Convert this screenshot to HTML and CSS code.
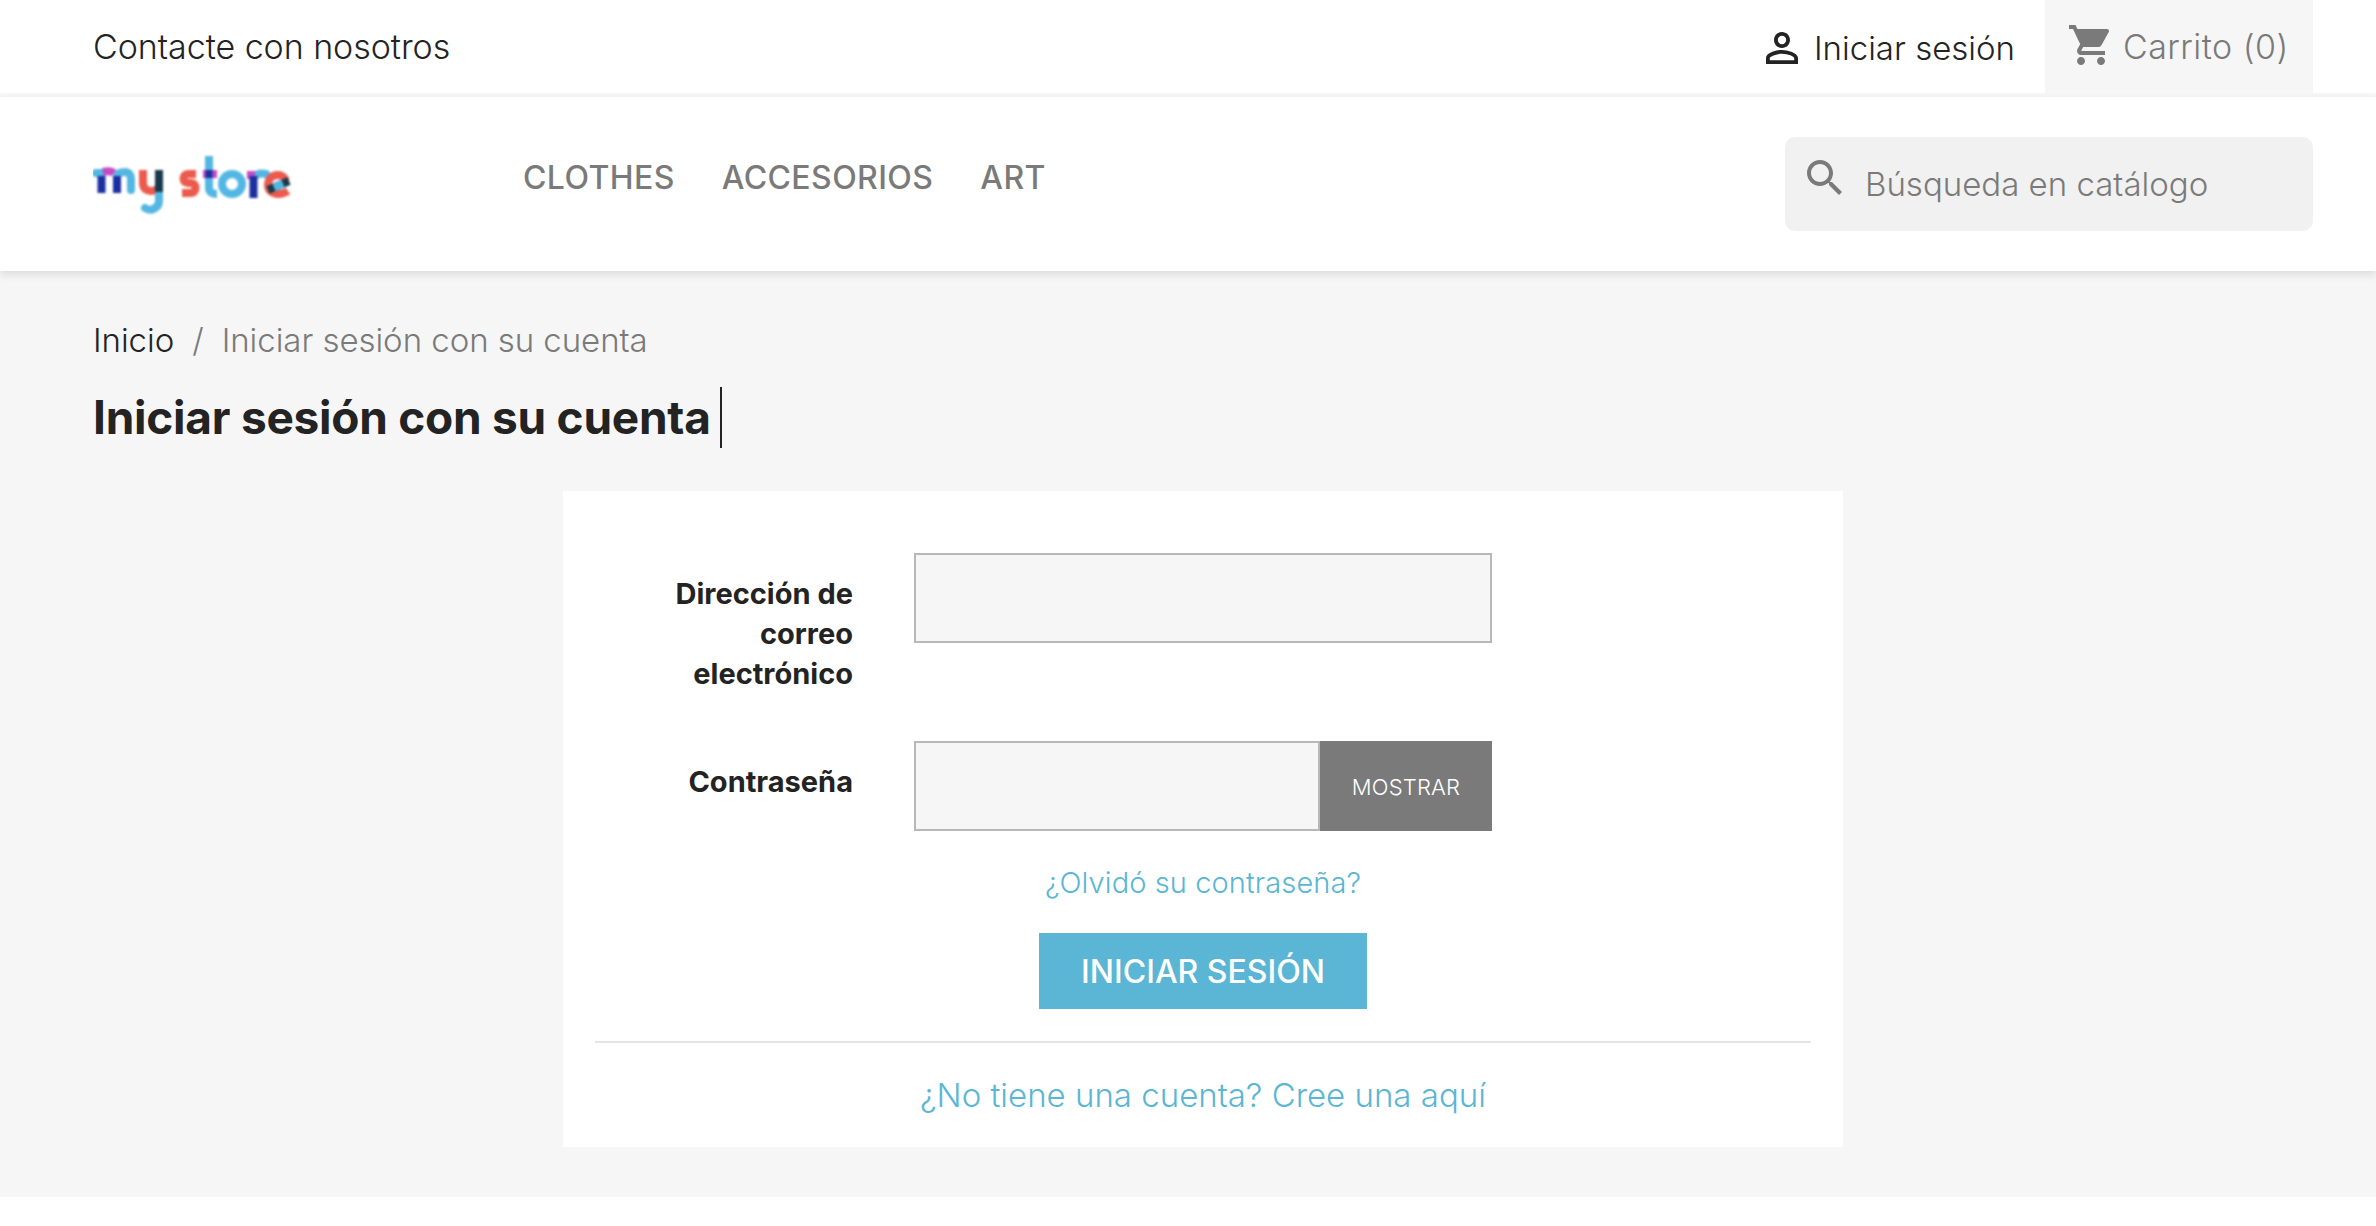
FILE: index.html
```html
<!DOCTYPE html>
<html lang="es">
<head>
<meta charset="utf-8">
<title>Iniciar sesión</title>
<link rel="stylesheet" href="styles.css">
</head>
<body>
<nav class="topbar">
  <a class="contact">Contacte con nosotros</a>
  <div class="top-right">
    <a class="signin">
      <svg class="ico-user" viewBox="0 0 24 24"><path d="M12 5.9a2.1 2.1 0 1 1 0 4.2 2.1 2.1 0 0 1 0-4.2m0 9c2.97 0 6.1 1.46 6.1 2.1v1.1H5.9V17c0-.64 3.13-2.1 6.1-2.1M12 4C9.79 4 8 5.79 8 8s1.79 4 4 4 4-1.79 4-4-1.79-4-4-4zm0 9c-2.67 0-8 1.34-8 4v3h16v-3c0-2.66-5.33-4-8-4z"/></svg>
      <span>Iniciar sesión</span>
    </a>
    <a class="cart">
      <svg class="ico-cart" viewBox="0 0 24 24"><path d="M7 18c-1.1 0-1.99.9-1.99 2S5.9 22 7 22s2-.9 2-2-.9-2-2-2zM1 2v2h2l3.6 7.59-1.35 2.45c-.16.28-.25.61-.25.96 0 1.1.9 2 2 2h12v-2H7.42c-.14 0-.25-.11-.25-.25l.03-.12.9-1.63h7.45c.75 0 1.41-.41 1.75-1.03l3.58-6.49c.08-.14.12-.31.12-.48 0-.55-.45-1-1-1H5.21l-.94-2H1zm16 16c-1.1 0-1.99.9-1.99 2s.89 2 1.99 2 2-.9 2-2-.9-2-2-2z"/></svg>
      <span>Carrito (0)</span>
    </a>
  </div>
</nav>
<header class="header">
  <a class="logo" aria-label="my store">
    <svg viewBox="0 0 210 70" width="210" height="70">
      <g class="logo-art" fill="none" stroke-width="8" stroke-linecap="butt" stroke-linejoin="round">
        <!-- m -->
        <path stroke="#54b7e3" stroke-linecap="round" d="M3 23h6M24 26c1-4 5-4 8-4 4 0 6 3 6 7v11"/>
        <path stroke="#c54bc4" d="M10 22c4-1 8-1 11 1"/>
        <path stroke="#1c2fa0" d="M8.500 26v17M24 26v17"/>
        <!-- y -->
        <path stroke="#ec5a4e" d="M50 20v13c0 6 4 8 8 8 4 0 7-2 8-5"/>
        <path stroke="#54b7e3" stroke-linecap="round" d="M66 42v9c0 7-8 11-14 7"/>
        <path stroke="#163a4a" d="M66 20v22"/>
        <!-- s -->
        <path stroke="#ec5a4e" d="M103 24H95c-6 0-6 9 0 9h3c6 0 6 10 0 10h-9"/>
        <!-- t -->
        <path stroke="#54b7e3" d="M116 6v32c0 4 3 6 8 6"/>
        <path stroke="#c54bc4" d="M110 24h14"/>
        <path stroke="#1c2fa0" d="M112.500 24h7"/>
        <!-- o -->
        <circle stroke="#54b7e3" cx="139" cy="34" r="10"/>
        <!-- r -->
        <path stroke="#54b7e3" stroke-linecap="round" d="M162 26c2-2 6-3 11-2"/>
        <path stroke="#c54bc4" d="M154 25h8"/>
        <path stroke="#1c2fa0" d="M160.500 26v22"/>
        <!-- e -->
        <path stroke="#ec5a4e" d="M193 31c-2-5-6-6-8-6-6 0-10 4-10 10 0 6 5 9 10 9 4 0 7-1 10-3"/>
        <path stroke="#163a4a" d="M175 40l21-9"/>
        <path stroke="#54b7e3" d="M181 37.500l9-4"/>
      </g>
    </svg>
  </a>
  <nav class="menu">
    <a>CLOTHES</a>
    <a>ACCESORIOS</a>
    <a>ART</a>
  </nav>
  <div class="search">
    <svg class="ico-search" viewBox="0 0 24 24"><path d="M15.5 14h-.79l-.28-.27C15.41 12.59 16 11.11 16 9.5 16 5.91 13.09 3 9.5 3S3 5.91 3 9.5 5.91 16 9.5 16c1.61 0 3.09-.59 4.23-1.57l.27.28v.79l5 4.99L20.49 19l-4.99-5zm-6 0C7.01 14 5 11.99 5 9.5S7.01 5 9.5 5 14 7.01 14 9.5 11.99 14 9.5 14z"/></svg>
    <span class="search-ph">Búsqueda en catálogo</span>
  </div>
</header>
<main class="main">
  <ol class="crumbs">
    <li class="crumb-home">Inicio</li>
    <li class="crumb-sep">/</li>
    <li class="crumb-cur">Iniciar sesión con su cuenta</li>
  </ol>
  <h1 class="title"><span class="title-text">Iniciar sesión con su cuenta</span><span class="caret"></span></h1>
  <section class="card">
    <form class="form">
      <div class="row row-email">
        <label class="label">Dirección de correo electrónico</label>
        <div class="field"><div class="input"></div></div>
      </div>
      <div class="row row-pass">
        <label class="label">Contraseña</label>
        <div class="field group"><div class="input"></div><div class="show">MOSTRAR</div></div>
      </div>
      <a class="forgot">¿Olvidó su contraseña?</a>
      <button type="button" class="submit">INICIAR SESIÓN</button>
    </form>
    <hr class="rule">
    <a class="register">¿No tiene una cuenta? Cree una aquí</a>
  </section>
</main>
</body>
</html>
```
FILE: styles.css
```css
* { box-sizing: border-box; }
html, body { margin: 0; padding: 0; background: #fff; }
body { font-family: Inter, "Noto Sans", sans-serif; color: #232323; height: 1226px; overflow: hidden; }
a { color: inherit; text-decoration: none; }
.topbar { height: 97px; border-bottom: 4px solid #f6f6f6; padding: 0 63px 0 93px; display: flex; justify-content: space-between; align-items: center; background: #fff; }
.contact { font-size: 34px; font-weight: 300; letter-spacing: -.05px; padding-top: 0; }
.top-right { display: flex; align-items: stretch; height: 93px; }
.signin { display: flex; align-items: center; gap: 8px; font-size: 33px; font-weight: 300; padding: 2px 30px 0 0; }
.ico-user { width: 48px; height: 48px; fill: #232323; }
.cart { display: flex; align-items: center; gap: 8px; width: 268px; padding-left: 22px; background: #f6f6f6; color: #7a7a7a; font-size: 34px; font-weight: 300; letter-spacing: .45px; }
.ico-cart { width: 48px; height: 48px; fill: #7a7a7a; margin-top: -3px; }
.header { height: 174px; padding: 0 63px 0 93px; display: flex; align-items: center; background: #fff; box-shadow: 0 4px 8px rgba(0,0,0,.1); position: relative; }
.logo { width: 430px; display: block; margin-top: 2px; }
.logo svg { display: block; }
.logo-art { filter: blur(.8px); }
.menu { display: flex; gap: 47px; font-size: 32px; font-weight: 500; color: #7a7a7a; letter-spacing: .4px; flex: 1; margin-top: -13px; }
.search { width: 528px; height: 94px; background: #f1f1f1; border-radius: 10px; display: flex; align-items: center; padding-left: 16px; gap: 16px; color: #7a7a7a; }
.ico-search { width: 48px; height: 48px; fill: #7a7a7a; margin-top: -12px; }
.search-ph { font-size: 33px; font-weight: 300; }
.main { height: 926px; background: #f6f6f6; padding: 47px 533px 0 93px; }
.crumbs { list-style: none; margin: 0; padding: 0; display: flex; gap: 18px; font-size: 33px; font-weight: 300; line-height: 44px; letter-spacing: -.05px; }
.crumb-sep, .crumb-cur { color: #7a7a7a; }
.title { margin: 25px 0 0; font-size: 46px; font-weight: 700; letter-spacing: -.25px; line-height: 61px; display: flex; align-items: center; height: 61px; }
.caret { width: 2px; height: 61px; background: #232323; margin-left: 9px; }
.card { width: 1280px; height: 656px; margin: 43px 0 0 470px; padding: 62px 32px 0; background: #fff; }
.form { display: flex; flex-direction: column; align-items: center; }
.row { width: 100%; display: flex; align-items: flex-start; }
.row-email { height: 188px; }
.row-pass { height: 90px; }
.label { width: 258px; margin-right: 61px; padding: 21px 0 0 18px; text-align: right; font-size: 29px; font-weight: 700; line-height: 40px; }
.field { width: 578px; height: 90px; display: flex; }
.input { flex: 1; background: #f6f6f6; border: 2px solid #b8b8b8; }
.show { width: 172px; padding-top: 2px; background: #7a7a7a; color: #fff; font-size: 22px; font-weight: 300; display: flex; align-items: center; justify-content: center; letter-spacing: .2px; }
.forgot { margin-top: 32px; font-size: 29px; font-weight: 300; color: #5ab6d4; letter-spacing: .1px; line-height: 40px; }
.submit { margin-top: 30px; width: 328px; height: 76px; background: #5ab6d4; color: #fff; border: 0; font: 500 32px Inter, sans-serif; padding: 0; }
.rule { margin: 32px 0 0; border: 0; height: 2px; background: #e5e5e5; }
.register { display: block; text-align: center; margin-top: 29px; font-size: 33px; font-weight: 300; color: #5ab6d4; line-height: 46px; }
```
